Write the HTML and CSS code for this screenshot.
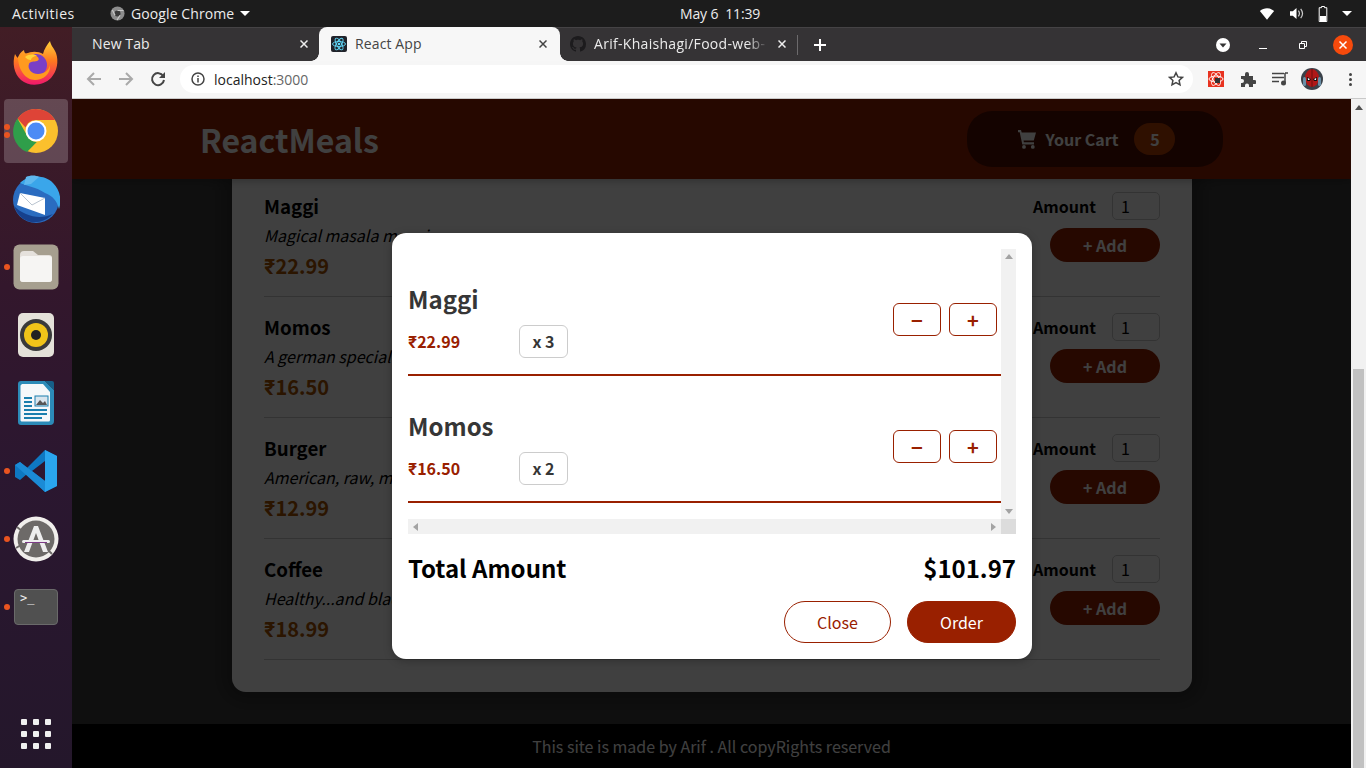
FILE: index.html
```html
<!DOCTYPE html>
<html lang="en">
<head>
<meta charset="utf-8">
<title>React App</title>
<link rel="stylesheet" href="styles.css">
</head>
<body>
<div class="desktop">
  <div class="topbar">
    <span class="activities">Activities</span>
    <span class="appmenu">
      <svg class="appicon" width="15" height="15" viewBox="0 0 16 16"><circle cx="8" cy="8" r="7.5" fill="#8d8d8d"/><circle cx="8" cy="8" r="3.2" fill="#3a3a3a"/><path d="M8 4.8h6.4M5.4 10 2.5 4.3M10.7 9.8 7.5 15" stroke="#c9c9c9" stroke-width="1.2"/></svg>
      Google Chrome
      <i class="caret"></i>
    </span>
    <span class="clock">May 6&nbsp; 11:39</span>
    <span class="tray">
      <svg width="16" height="13" viewBox="0 0 18 14"><path d="M1 4.2C5.6.2 12.4.2 17 4.2L9 14z" fill="#fff"/></svg>
      <svg width="15" height="13" viewBox="0 0 16 14"><path d="M1 4.5h3L8 1v12L4 9.500H1z" fill="#fff"/><path d="M10 4c1.300 1.700 1.300 4.300 0 6M12.500 2c2.400 3 2.400 7 0 10" stroke="#ccc" stroke-width="1.300" fill="none"/></svg>
      <svg width="10" height="16" viewBox="0 0 10 16"><path d="M3.500.5h3v1.200h2.300v13.800H1.200V1.700h2.300z" fill="none" stroke="#fff"/><rect x="2" y="10" width="6" height="5" fill="#fff"/></svg>
      <i class="caret"></i>
    </span>
  </div>
  <div class="workarea">
    <nav class="dock">
      <div class="dock-item">
        <svg width="48" height="48" viewBox="0 0 48 48"><defs><linearGradient id="fx" x1="0" y1="0" x2="0" y2="1"><stop offset="0" stop-color="#ffd23a"/><stop offset=".45" stop-color="#ff7a1f"/><stop offset="1" stop-color="#f0186b"/></linearGradient></defs><path d="M38 2c1 5 4 7 6 12 3 9 1 18-5 25-8 8-22 9-30 2C2 35 0 24 3 15c1 2 2 3 3 4 1-4 3-6 6-8 0 2 1 3 2 4 5-3 12-3 17 0 1-5 4-9 7-13z" fill="url(#fx)"/><circle cx="24" cy="26" r="11" fill="#7a3fc6"/><path d="M6 18c4-4 12-5 17-2 4 2 5 5 2 6-3 1-7 0-8 3-2 5 3 10 9 10 6 0 11-4 12-9 1 9-7 15-15 15C13 41 6 30 6 18z" fill="#ff9a1f"/><path d="M13 18c4-3 9-3 12-1-3 0-6 2-6 4-3 0-4-1-6-3z" fill="#ffd23a"/></svg>
      </div>
      <div class="dock-item active">
        <span class="dot double"></span>
        <svg width="48" height="48" viewBox="0 0 48 48"><circle cx="24" cy="24" r="22" fill="#fbc02d"/><path d="M24 2a22 22 0 0 1 19.100 11H24a11 11 0 0 0-10.500 7.500L5.500 11.500A22 22 0 0 1 24 2z" fill="#de4437"/><path d="M5.500 11.500l9.500 17a11 11 0 0 0 9.800 6.500L15 45.100A22 22 0 0 1 5.500 11.500z" fill="#2f9e4a"/><circle cx="24" cy="24" r="10.500" fill="#fff"/><circle cx="24" cy="24" r="8.500" fill="#4c8bf5"/></svg>
      </div>
      <div class="dock-item">
        <svg width="48" height="48" viewBox="0 0 48 48"><circle cx="24" cy="25" r="23" fill="#2a6cc0"/><path d="M8 8c8-8 24-9 33 0 7 7 9 17 6 26-2-8-6-13-14-16C24 12 15 11 8 8z" fill="#3aa6ea"/><path d="M14 2c4-2 10-2 13 0l-8 7-7 1z" fill="#5fb8ee"/><path d="M8 18l25 5v17L5 30z" fill="#fff"/><path d="M8 18l12 12 13-7" stroke="#b9c4d0" fill="none"/><path d="M2 31c3 8 8 14 17 16 9 1 16-2 22-8-9 4-18 4-27 0-5-2-9-5-12-8z" fill="#16408c"/></svg>
      </div>
      <div class="dock-item">
        <span class="dot"></span>
        <svg width="46" height="46" viewBox="0 0 46 46"><rect x="0.500" y="0.500" width="45" height="45" rx="6" fill="#a69f8f"/><path d="M7 11a4 4 0 0 1 4-4h9l5 4h11a3 3 0 0 1 3 3v21a3 3 0 0 1-3 3H10a3 3 0 0 1-3-3z" fill="#e5e1dc"/><path d="M7 15a3 3 0 0 1 3-3h26a3 3 0 0 1 3 3v20a3 3 0 0 1-3 3H10a3 3 0 0 1-3-3z" fill="#f6f5f3"/></svg>
      </div>
      <div class="dock-item">
        <svg width="38" height="46" viewBox="0 0 38 46"><rect x="1" y="1" width="36" height="44" rx="5" fill="#e4e1d9"/><circle cx="19" cy="23" r="16" fill="#3a3a3a"/><circle cx="19" cy="23" r="12" fill="#f0c419"/><circle cx="19" cy="23" r="5" fill="#222"/></svg>
      </div>
      <div class="dock-item">
        <svg width="38" height="46" viewBox="0 0 38 46"><path d="M4 1h24l9 9v31a4 4 0 0 1-4 4H4a3 3 0 0 1-3-3V4a3 3 0 0 1 3-3z" fill="#2c8bb8"/><path d="M28 1h7a2 2 0 0 1 2 2v7z" fill="#165f88"/><path d="M5 4h21l7 8v28a1.500 1.500 0 0 1-1.500 1.500h-27A1.500 1.500 0 0 1 3.500 40V5.500z" fill="#f5f8fa"/><path d="M7 17h8v2H7zM7 21h8v2H7zM7 25h8v2H7zM7 29h23v2H7zM7 33h23v2H7zM7 37h18v2H7z" fill="#1b7fae"/><rect x="18" y="16" width="13" height="10" fill="#d8e5ee" stroke="#1b7fae"/><path d="M19 25l4-5 3 3 2-2 2 4z" fill="#555"/></svg>
      </div>
      <div class="dock-item">
        <span class="dot"></span>
        <svg width="44" height="42" viewBox="0 0 44 42"><path d="M31 0l12 6v30l-12 6L13 24l-7 6-5-3V15l5-3 7 6z" fill="#0e78c2"/><path d="M31 0l12 6v30l-12 6z" fill="#2aa5ee"/><path d="M31 11v20l-13-10z" fill="#2f1730"/><path d="M1 15l5-3 25 19v11z" fill="#1b8bd6"/></svg>
      </div>
      <div class="dock-item">
        <span class="dot"></span>
        <svg width="46" height="46" viewBox="0 0 46 46"><circle cx="23" cy="23" r="22.500" fill="#f1efec"/><circle cx="23" cy="23" r="18.500" fill="#6d6a68"/><path d="M4 11l5 4M3 32l5-3M39 38l-4-4" stroke="#6d6a68" stroke-width="2"/><path d="M11 36l10-26h4l10 26h-5l-7-19-7 19z" fill="#eee"/><rect x="9" y="24" width="28" height="3" rx="1.500" fill="#eee"/><rect x="12" y="26" width="22" height="1" fill="#7c3a87"/></svg>
      </div>
      <div class="dock-item">
        <span class="dot"></span>
        <div class="term">&gt;_</div>
      </div>
      <div class="dock-spacer"></div>
      <div class="grid-btn"><i></i><i></i><i></i><i></i><i></i><i></i><i></i><i></i><i></i></div>
    </nav>
    <div class="browser">
      <div class="tabstrip">
        <div class="tab">
          <span class="tab-title">New Tab</span>
          <svg class="tab-x" width="8" height="8" viewBox="0 0 8 8"><path d="M.5.500l7 7M7.500.500l-7 7" stroke="#eee" stroke-width="1.500"/></svg>
        </div>
        <div class="tab tab-active">
          <svg class="fav" width="16" height="16" viewBox="0 0 16 16"><rect width="16" height="16" rx="2" fill="#20232a"/><g fill="none" stroke="#61dafb" stroke-width=".9"><ellipse cx="8" cy="8" rx="6.500" ry="2.500"/><ellipse cx="8" cy="8" rx="6.500" ry="2.500" transform="rotate(60 8 8)"/><ellipse cx="8" cy="8" rx="6.500" ry="2.500" transform="rotate(120 8 8)"/></g><circle cx="8" cy="8" r="1.300" fill="#61dafb"/></svg>
          <span class="tab-title">React App</span>
          <svg class="tab-x" width="8" height="8" viewBox="0 0 8 8"><path d="M.5.500l7 7M7.500.500l-7 7" stroke="#444" stroke-width="1.500"/></svg>
        </div>
        <div class="tab tab-third">
          <svg class="fav" width="16" height="16" viewBox="0 0 16 16"><path fill="#1c1b1d" d="M8 0C3.580 0 0 3.580 0 8c0 3.540 2.290 6.530 5.470 7.590.4.070.55-.17.55-.38 0-.19-.01-.82-.01-1.490-2.010.37-2.530-.49-2.690-.94-.09-.23-.48-.94-.82-1.130-.28-.15-.68-.52-.01-.53.630-.01 1.080.58 1.230.82.720 1.210 1.870.87 2.330.66.070-.52.280-.87.510-1.070-1.780-.2-3.640-.89-3.640-3.950 0-.87.310-1.590.82-2.150-.08-.2-.36-1.020.08-2.120 0 0 .67-.21 2.200.82.640-.18 1.320-.27 2-.27s1.360.09 2 .27c1.530-1.040 2.200-.82 2.200-.82.44 1.100.16 1.920.08 2.120.51.560.82 1.270.82 2.150 0 3.070-1.870 3.750-3.650 3.950.290.250.540.730.540 1.480 0 1.070-.01 1.930-.01 2.200 0 .21.150.46.550.38A8.010 8.010 0 0 0 16 8c0-4.420-3.580-8-8-8z"/></svg>
          <span class="tab-title fade">Arif-Khaishagi/Food-web-</span>
          <svg class="tab-x" width="8" height="8" viewBox="0 0 8 8"><path d="M.5.500l7 7M7.500.500l-7 7" stroke="#eee" stroke-width="1.500"/></svg>
        </div>
        <span class="tab-sep"></span>
        <span class="tab-new">
          <svg width="12" height="12" viewBox="0 0 12 12"><path d="M6 0v12M0 6h12" stroke="#fff" stroke-width="2"/></svg>
        </span>
        <span class="win-controls">
          <svg class="win-search" width="14" height="14" viewBox="0 0 14 14"><circle cx="7" cy="7" r="7" fill="#fff"/><path d="M3.500 5.500h7L7 9.500z" fill="#333"/></svg>
          <svg class="win-min" width="8" height="8" viewBox="0 0 8 8"><path d="M0 7.500h8" stroke="#fff"/></svg>
          <svg class="win-max" width="8" height="8" viewBox="0 0 8 8"><path d="M2.500 2V.5h5v5H6M.5 2.500h5v5h-5z" fill="none" stroke="#fff"/></svg>
          <svg class="win-close" width="20" height="20" viewBox="0 0 20 20"><circle cx="10" cy="10" r="10" fill="#f64a0c"/><path d="M6.500 6.500l7 7M13.500 6.500l-7 7" stroke="#fff" stroke-width="1.500"/></svg>
        </span>
      </div>
      <div class="toolbar">
        <svg class="tb-back" width="16" height="16" viewBox="0 0 16 16"><path d="M15 8H2M8 2 2 8l6 6" fill="none" stroke="#a9a9a9" stroke-width="2"/></svg>
        <svg class="tb-fwd" width="16" height="16" viewBox="0 0 16 16"><path d="M1 8h13M8 2l6 6-6 6" fill="none" stroke="#a9a9a9" stroke-width="2"/></svg>
        <svg class="tb-reload" width="16" height="16" viewBox="0 0 16 16"><path d="M13.200 5A6 6 0 1 0 14 9" fill="none" stroke="#444" stroke-width="2"/><path d="M15 1v6H9z" fill="#444"/></svg>
        <div class="urlbar">
          <svg width="14" height="14" viewBox="0 0 14 14"><circle cx="7" cy="7" r="6" fill="none" stroke="#444" stroke-width="1.500"/><path d="M7 6v4.500M7 3.500v1.500" stroke="#444" stroke-width="1.500"/></svg>
          <span class="url"><b>localhost</b>:3000</span>
          <svg class="star" width="16" height="16" viewBox="0 0 16 16"><path d="M8 1.800l1.900 4.100 4.500.5-3.300 3 .9 4.500L8 11.700l-4 2.200.9-4.500-3.300-3 4.500-.5z" fill="none" stroke="#444" stroke-width="1.500"/></svg>
        </div>
        <svg class="ext-red" width="16" height="16" viewBox="0 0 16 16"><rect width="16" height="16" fill="#e8321f"/><g fill="none" stroke="#fff" stroke-width=".9"><ellipse cx="8" cy="8" rx="7" ry="3"/><ellipse cx="8" cy="8" rx="7" ry="3" transform="rotate(60 8 8)"/><ellipse cx="8" cy="8" rx="7" ry="3" transform="rotate(120 8 8)"/></g><rect x="7" y="7" width="5" height="5" fill="#333"/></svg>
        <svg class="ext-puzzle" width="16" height="16" viewBox="0 0 16 16"><path d="M1 5h4V3a2 2 0 0 1 4 0v2h4v4h1.500a2 2 0 0 1 0 4H13v3H9v-1.500a2 2 0 0 0-4 0V16H1v-4h1a2 2 0 0 0 0-4H1z" fill="#444"/></svg>
        <svg class="ext-media" width="16" height="14" viewBox="0 0 16 14"><path d="M0 1.500h12M0 5.500h12M0 9.500h7" stroke="#444" stroke-width="1.500"/><path d="M13 1v9.500" stroke="#444" stroke-width="1.500"/><path d="M13 1h3" stroke="#444" stroke-width="1.500"/><circle cx="11.500" cy="11" r="2.500" fill="#444"/></svg>
        <svg class="avatar" width="22" height="22" viewBox="0 0 22 22"><circle cx="11" cy="11" r="11" fill="#3a4149"/><ellipse cx="11" cy="10" rx="7" ry="9" fill="#b01818"/><path d="M6 9l4 2-1 2H6zM16 9l-4 2 1 2h3z" fill="#111"/><path d="M6.800 10l2 1-.6 1H7zM15.200 10l-2 1 .6 1H15z" fill="#fff"/><path d="M11 1v18" stroke="#6d0e0e"/><rect x="2" y="9" width="3" height="9" rx="1.500" fill="#6a8ea6"/><rect x="17" y="9" width="3" height="9" rx="1.500" fill="#6a8ea6"/></svg>
        <span class="kebab"><i></i><i></i><i></i></span>
      </div>
      <div class="viewport">
        <div class="page">
          <header class="app-header">
            <h1>ReactMeals</h1>
            <button class="cart-btn">
              <svg width="20" height="20" viewBox="0 0 20 20"><path fill="currentColor" d="M1 1h3l.7 2.500H19l-2.200 8H6.500l.4 1.800h10.100V15.500H5.300L2.700 3.200H1zM7 16a1.900 1.900 0 1 1 0 3.800A1.900 1.900 0 0 1 7 16zm8.800 0a1.900 1.900 0 1 1 0 3.800 1.900 1.900 0 0 1 0-3.800z"/></svg>
              <span>Your Cart</span>
              <span class="badge">5</span>
            </button>
          </header>
          <main class="content">
            <section class="card">
              <div class="meal">
                <div class="meal-info"><h3>Maggi</h3><p class="desc">Magical masala maggi</p><p class="price"><span class="rupee">₹</span>22.99</p></div>
                <div class="meal-form"><label class="amount"><span>Amount</span><span class="qty">1</span></label><span class="add">+ Add</span></div>
              </div>
              <div class="meal">
                <div class="meal-info"><h3>Momos</h3><p class="desc">A german specialty</p><p class="price"><span class="rupee">₹</span>16.50</p></div>
                <div class="meal-form"><label class="amount"><span>Amount</span><span class="qty">1</span></label><span class="add">+ Add</span></div>
              </div>
              <div class="meal">
                <div class="meal-info"><h3>Burger</h3><p class="desc">American, raw, meaty</p><p class="price"><span class="rupee">₹</span>12.99</p></div>
                <div class="meal-form"><label class="amount"><span>Amount</span><span class="qty">1</span></label><span class="add">+ Add</span></div>
              </div>
              <div class="meal">
                <div class="meal-info"><h3>Coffee</h3><p class="desc">Healthy...and black</p><p class="price"><span class="rupee">₹</span>18.99</p></div>
                <div class="meal-form"><label class="amount"><span>Amount</span><span class="qty">1</span></label><span class="add">+ Add</span></div>
              </div>
            </section>
          </main>
          <footer class="app-footer">This site is made by Arif . All copyRights reserved</footer>
          <div class="backdrop"></div>
          <div class="modal">
            <div class="cart-scroll">
              <div class="cart-list">
                <div class="cart-item">
                  <div><h2>Maggi</h2><div class="summary"><span class="item-price"><span class="rupee">₹</span>22.99</span><span class="item-amount">x 3</span></div></div>
                  <div class="item-actions"><button>−</button><button>+</button></div>
                </div>
                <div class="cart-item">
                  <div><h2>Momos</h2><div class="summary"><span class="item-price"><span class="rupee">₹</span>16.50</span><span class="item-amount">x 2</span></div></div>
                  <div class="item-actions"><button>−</button><button>+</button></div>
                </div>
              </div>
              <div class="vbar"><i class="arrow up"></i><i class="arrow down"></i></div>
              <div class="hbar"><i class="arrow left"></i><i class="arrow right"></i></div>
              <div class="corner"></div>
            </div>
            <div class="total"><span>Total Amount</span><span>$101.97</span></div>
            <div class="modal-actions"><button class="btn-alt">Close</button><button class="btn-main">Order</button></div>
          </div>
        </div>
        <div class="page-scroll"><i class="arrow up dark"></i><div class="thumb"></div></div>
      </div>
    </div>
  </div>
</div>
</body>
</html>
```
FILE: styles.css
```css
* { box-sizing: border-box; }
html, body { margin: 0; padding: 0; overflow: hidden; }
body { font-family: "Noto Sans CJK JP", "Noto Sans", sans-serif; }
.desktop { width: 1366px; height: 768px; display: flex; flex-direction: column; overflow: hidden; }

/* top bar */
.topbar { height: 27px; flex: none; background: #1c1c1c; color: #ececec; display: grid; grid-template-columns: 98px 570px 1fr auto; align-items: center; padding-left: 12px; font: 14px/27px "Open Sans", "Noto Sans", sans-serif; }
.activities { letter-spacing: .5px; }
.appmenu { display: flex; align-items: center; gap: 6px; letter-spacing: .1px; }
.caret { display: inline-block; width: 0; height: 0; border-left: 5px solid transparent; border-right: 5px solid transparent; border-top: 5px solid #fff; }
.clock { white-space: pre; letter-spacing: -.15px; }
.tray { display: flex; align-items: center; gap: 14px; padding-right: 14px; }

.workarea { flex: 1; display: flex; min-height: 0; }

/* dock */
.dock { width: 72px; flex: none; background: linear-gradient(180deg, #421d25 0%, #33172c 35%, #2b1730 60%, #24172b 100%); display: flex; flex-direction: column; padding-top: 2px; }
.dock-item { height: 68px; flex: none; display: flex; align-items: center; justify-content: center; position: relative; }
.dock-item.active::before { content: ""; position: absolute; left: 4px; right: 4px; top: 2px; bottom: 2px; background: rgba(255,255,255,.2); border-radius: 4px; }
.dock-item svg { position: relative; }
.dot { position: absolute; left: 4px; top: 31px; width: 6px; height: 6px; border-radius: 50%; background: #e95420; }
.dot.double { top: 27px; box-shadow: 0 8px 0 #e95420; }
.term { width: 44px; height: 36px; background: #505050; border-radius: 4px; border: 1px solid #6a6a6a; color: #eee; font: 12px/14px "DejaVu Sans Mono", monospace; padding: 1px 5px; position: relative; }
.dock-spacer { flex: 1; }
.grid-btn { display: grid; grid-template-columns: repeat(3, 6px); grid-auto-rows: 6px; gap: 6px; justify-content: center; padding-bottom: 19px; }
.grid-btn i { background: #f0f0f0; border-radius: 1px; }

/* browser */
.browser { flex: 1; min-width: 0; display: flex; flex-direction: column; }
.tabstrip { height: 34px; flex: none; background: #353335; border-top: 1px solid #454345; display: flex; align-items: stretch; font: 14px/32px "Open Sans", "Noto Sans", sans-serif; color: #ececec; letter-spacing: .12px; }
.tab { display: flex; align-items: center; width: 247px; padding: 0 11px 1px 20px; position: relative; }
.tab-title { flex: 1; white-space: nowrap; overflow: hidden; }
.tab-x { flex: none; }
.tab-active { width: 241px; margin-top: -1px; background: #f7f7f7; color: #444; border-radius: 8px 8px 0 0; padding-left: 12px; padding-right: 13px; }
.tab-active::before, .tab-active::after { content: ""; position: absolute; bottom: 0; width: 8px; height: 8px; }
.tab-active::before { left: -8px; background: radial-gradient(circle at 0 0, transparent 7.5px, #f7f7f7 8px); }
.tab-active::after { right: -8px; background: radial-gradient(circle at 100% 0, transparent 7.5px, #f7f7f7 8px); }
.fav { flex: none; margin-right: 8px; }
.tab-third { width: 237px; padding-left: 10px; padding-right: 11px; }
.fade { -webkit-mask-image: linear-gradient(90deg, #000 88%, transparent 100%); mask-image: linear-gradient(90deg, #000 88%, transparent 100%); margin-right: 10px; letter-spacing: .3px; }
.tab-sep { width: 1px; height: 20px; background: #6c6a6c; align-self: center; }
.tab-new { margin-left: 16px; display: flex; align-items: center; }
.win-controls { margin-left: auto; display: flex; align-items: center; padding-right: 13px; }
.win-search { margin-right: 29px; }
.win-min { margin-right: 32px; }
.win-max { margin-right: 26px; }

.toolbar { height: 38px; flex: none; background: #f6f6f6; border-bottom: 1px solid #c9c9c9; display: flex; align-items: center; padding: 0 0 1px 14px; }
.tb-back { margin-right: 16px; }
.tb-fwd { margin-right: 16px; }
.tb-reload { margin-right: 14px; }
.urlbar { width: 1013px; height: 28px; background: #fff; border-radius: 14px; display: flex; align-items: center; padding: 0 9px 0 11px; font: 14px/27px "Open Sans", "Noto Sans", sans-serif; color: #666; margin-right: 15px; }
.url { margin-left: 9px; flex: 1; }
.url b { font-weight: 400; color: #222; }
.ext-red { margin-right: 16px; }
.ext-puzzle { margin-right: 16px; }
.ext-media { margin-right: 13px; }
.avatar { margin-right: 26px; }
.kebab { display: grid; grid-auto-rows: 3px; gap: 2px; }
.kebab i { width: 3px; height: 3px; border-radius: 50%; background: #444; }

/* page */
.viewport { flex: 1; min-height: 0; display: flex; }
.page { flex: 1; min-width: 0; position: relative; display: flex; flex-direction: column; background: #3f3f3f; overflow: hidden; }
.app-header { height: 80px; flex: none; background: #992000; color: #fff; display: flex; justify-content: space-between; align-items: center; padding: 0 128px; position: relative; z-index: 1; box-shadow: 0 2px 8px rgba(0,0,0,.25); }
.app-header h1 { margin: 0; font-size: 32px; line-height: 46px; font-weight: 700; }
.cart-btn { width: 256px; height: 56px; border: 0; border-radius: 25px; background: #500f00; color: #fff; font: 700 16px/24px "Noto Sans CJK JP", sans-serif; display: flex; align-items: center; justify-content: center; gap: 9px; padding: 0 0 0 2px; }
.badge { width: 41px; height: 32px; border-radius: 25px; background: #bc4000; margin-left: 7px; display: flex; align-items: center; justify-content: center; }

.content { flex: 1; min-height: 0; padding: 0 0 32px 160px; }
.card { width: 960px; background: #fff; border-radius: 0 0 14px 14px; height: 513px; padding: 0 32px 32px; color: #000; box-shadow: 0 1px 18px 10px rgba(0,0,0,.25); }
.meal { height: 121px; padding-top: 16px; border-bottom: 1px solid #ccc; display: flex; justify-content: space-between; }
.meal:first-child { height: 118px; padding-top: 13px; }
.meal h3 { margin: 0 0 2px; font-size: 18.72px; line-height: 28px; font-weight: 700; }
.desc { margin: 0 0 2px; font-size: 16px; line-height: 26px; font-style: italic; }
.price { margin: 0; font-size: 20px; line-height: 32px; font-weight: 700; color: #ad5502; }
.rupee { font-family: Inter, sans-serif; line-height: 1; }
.meal-form { display: flex; flex-direction: column; align-items: flex-end; gap: 8px; }
.amount { display: flex; align-items: center; gap: 16px; font-weight: 700; font-size: 16px; height: 28px; }
.qty { width: 48px; height: 28px; border: 1px solid #ccc; border-radius: 5px; padding-left: 8px; font-weight: 400; line-height: 26px; }
.add { width: 110px; height: 34px; border-radius: 20px; background: #992000; color: #fff; font-weight: 700; font-size: 16px; line-height: 34px; text-align: center; }

.app-footer { height: 44px; flex: none; background: #000; color: #fff; font-size: 16px; line-height: 44px; text-align: center; }

.backdrop { position: absolute; inset: 0; background: rgba(0,0,0,.75); z-index: 2; }
.modal { position: absolute; left: 320px; top: 134px; width: 640px; height: 426px; background: #fff; border-radius: 14px; padding: 16px; z-index: 3; box-shadow: 0 2px 8px rgba(0,0,0,.25); }
.cart-scroll { width: 608px; height: 285px; display: grid; grid-template-columns: 593px 15px; grid-template-rows: 270px 15px; }
.cart-list { overflow: hidden; padding-top: 16px; }
.cart-item { display: flex; justify-content: space-between; align-items: center; border-bottom: 2px solid #992000; padding: 16px 0; margin-bottom: 16px; }
.cart-item h2 { margin: 0 0 8px; font-size: 24px; line-height: 36px; color: #363636; font-weight: 700; }
.summary { width: 160px; height: 33px; display: flex; justify-content: space-between; align-items: center; }
.item-price { font-weight: 700; font-size: 16px; line-height: 23px; color: #992000; }
.item-amount { min-width: 49px; text-align: center; font-weight: 700; font-size: 16px; line-height: 23px; border: 1px solid #ccc; border-radius: 6px; padding: 4px 0; color: #363636; }
.item-actions { display: flex; }
.item-actions button { width: 48px; height: 33px; margin: 4px; padding: 0; font: 700 20px/1 "Noto Sans CJK JP", sans-serif; color: #992000; border: 1px solid #992000; background: transparent; border-radius: 6px; }
.vbar { background: #f1f1f1; display: flex; flex-direction: column; justify-content: space-between; align-items: center; padding: 5px 0; }
.hbar { background: #f1f1f1; display: flex; justify-content: space-between; align-items: center; padding: 0 5px; }
.corner { background: #dcdcdc; }
.arrow { display: block; width: 0; height: 0; border: 4px solid transparent; }
.arrow.up { border-top: 0; border-bottom: 5px solid #a3a3a3; }
.arrow.down { border-bottom: 0; border-top: 5px solid #a3a3a3; }
.arrow.left { border-left: 0; border-right: 5px solid #a3a3a3; }
.arrow.right { border-right: 0; border-left: 5px solid #a3a3a3; }
.arrow.up.dark { border-bottom-color: #505050; }
.total { display: flex; justify-content: space-between; align-items: center; font-weight: 700; font-size: 24px; line-height: 36px; margin: 16px 0 15px; color: #000; }
.modal-actions { display: flex; justify-content: flex-end; gap: 16px; }
.modal-actions button { height: 42px; font: 400 16px/24px "Noto Sans CJK JP", sans-serif; border: 1px solid #992000; border-radius: 25px; padding: 0; }
.btn-alt { width: 107px; background: transparent; color: #992000; }
.btn-main { width: 109px; background: #992000; color: #fff; }

.page-scroll { width: 15px; flex: none; background: #f1f1f1; display: flex; flex-direction: column; align-items: center; padding-top: 6px; }
.thumb { width: 11px; height: 399px; margin-top: auto; background: #c1c1c1; }
```
